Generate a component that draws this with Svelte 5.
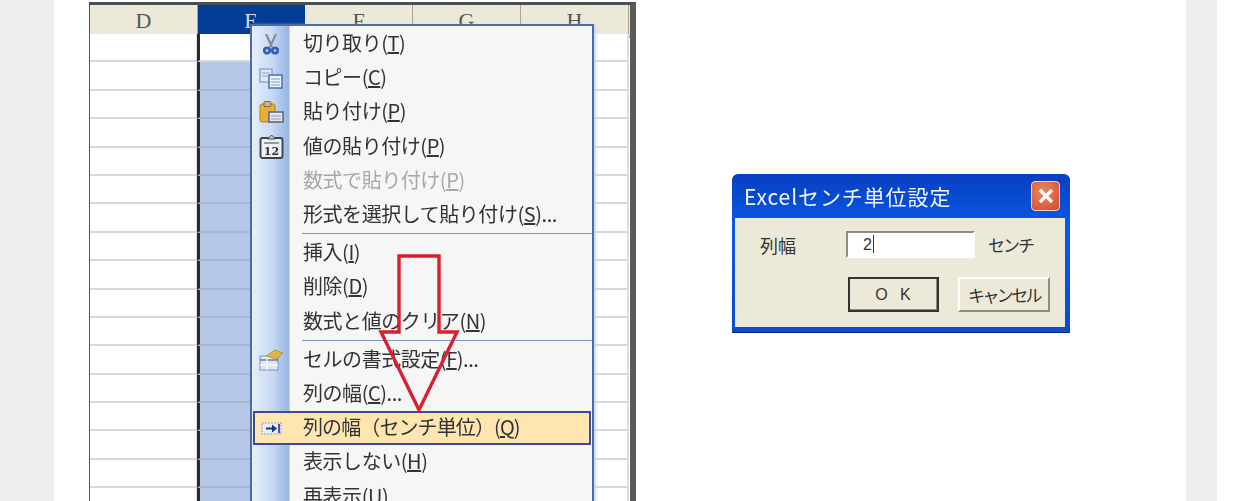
<script>
    const cols = ["D", "E", "F", "G", "H"];
    const rows = Array.from({ length: 17 }, (_, i) => i);

    const menu = [
        { label: "切り取り", key: "T", icon: "cut" },
        { label: "コピー", key: "C", icon: "copy" },
        { label: "貼り付け", key: "P", icon: "paste" },
        { label: "値の貼り付け", key: "P", icon: "values" },
        { label: "数式で貼り付け", key: "P", disabled: true },
        { label: "形式を選択して貼り付け", key: "S", tail: "...", sep: true },
        { label: "挿入", key: "I" },
        { label: "削除", key: "D" },
        { label: "数式と値のクリア", key: "N", sep: true },
        { label: "セルの書式設定", key: "F", tail: "...", icon: "format" },
        { label: "列の幅", key: "C", tail: "..." },
        { label: "列の幅（センチ単位）", key: "Q", icon: "width", active: true },
        { label: "表示しない", key: "H" },
        { label: "再表示", key: "U" }
    ];
</script>

<div class="page">
    <div class="gutter"></div>
    <main class="content">
        <section class="sheet">
            <div class="headers">
                {#each cols as c, i}
                    <div class="head" class:sel={i === 1}><span>{c}</span></div>
                {/each}
                <div class="head-end"></div>
            </div>
            <div class="grid">
                {#each rows as r}
                    {#each cols as c, i}
                        <div class="cell" class:blue={i === 1 && r > 0} class:current={i === 1}></div>
                    {/each}
                {/each}
            </div>

            <div class="menu">
                {#each menu as m}
                    <div class="item" class:disabled={m.disabled} class:active={m.active} class:sep={m.sep}>
                        <span class="ico">
                            {#if m.icon === "cut"}
                                <svg width="16" height="21" viewBox="0 0 16 21">
                                    <path d="M3 0l6 13M13 0L7 13" stroke="#858a96" stroke-width="2.2" fill="none" />
                                    <circle cx="4" cy="16.5" r="2.7" fill="none" stroke="#3560b8" stroke-width="2.8" />
                                    <circle cx="12" cy="16.5" r="2.7" fill="none" stroke="#3560b8" stroke-width="2.8" />
                                </svg>
                            {:else if m.icon === "copy"}
                                <svg width="24" height="21" viewBox="0 0 24 21">
                                    <rect x="1" y="1" width="12" height="13" fill="#e0e8f6" stroke="#88a6d8" stroke-width="1.5" />
                                    <path d="M3 5h8M3 8h8" stroke="#8aa4d0" />
                                    <rect x="10" y="7" width="13" height="13" fill="#eef3fb" stroke="#4d6fa8" stroke-width="1.5" />
                                    <path d="M12 11h9M12 14h9M12 17h9" stroke="#7f9ccb" />
                                </svg>
                            {:else if m.icon === "paste"}
                                <svg width="25" height="22" viewBox="0 0 25 22">
                                    <rect x="1" y="3" width="15" height="18" rx="2" fill="#e9ae35" stroke="#b08322" />
                                    <rect x="5" y="0.5" width="7" height="5" rx="1" fill="#c9b98a" stroke="#7d6b3c" />
                                    <rect x="10" y="11" width="14" height="10" fill="#e6e8ee" stroke="#5f6a80" stroke-width="1.6" />
                                    <path d="M12 15h10M12 18h10" stroke="#8d97ab" />
                                </svg>
                            {:else if m.icon === "values"}
                                <svg width="25" height="25" viewBox="0 0 25 25">
                                    <rect x="1.5" y="4" width="22" height="20" rx="2" fill="#eef1f6" stroke="#3d434e" stroke-width="1.9" />
                                    <path d="M8.5 5l4-4 4 4z" fill="#c8ccd4" stroke="#3d434e" />
                                    <path d="M5 9h15" stroke="#3d434e" />
                                    <text x="12.5" y="21" text-anchor="middle" class="twelve">12</text>
                                </svg>
                            {:else if m.icon === "format"}
                                <svg width="25" height="22" viewBox="0 0 25 22">
                                    <rect x="1" y="7" width="18" height="14" fill="#dfe6f1" stroke="#7f93b3" />
                                    <path d="M1 11h18" stroke="#5d7396" stroke-width="1.4" />
                                    <path d="M1 16h18M8 7v14" stroke="#f4f6fa" stroke-width="1.4" />
                                    <path d="M7 7l9-6 8 3-6 6z" fill="#e3b544" stroke="#a98a3a" stroke-width=".8" />
                                </svg>
                            {:else if m.icon === "width"}
                                <svg width="21" height="13" viewBox="0 0 21 13">
                                    <rect x="1" y="1" width="19" height="11" fill="#e8eefa" stroke="#9a9ab0" stroke-dasharray="2 1" />
                                    <path d="M5 6.5h9" stroke="#1e2f8c" stroke-width="2" />
                                    <path d="M11 2.5l5 4-5 4z" fill="#1e2f8c" />
                                    <path d="M18 2v9" stroke="#1e2f8c" stroke-width="1.6" />
                                </svg>
                            {/if}
                        </span>
                        <span class="label">{m.label}(<u>{m.key}</u>){m.tail ?? ""}</span>
                    </div>
                {/each}
            </div>

            <svg class="arrow" width="84" height="160" viewBox="0 0 84 160">
                <path d="M22 3H62V79H80L42 157L4 79H22Z" fill="none" stroke="#d8202f" stroke-width="3.4" />
            </svg>
        </section>

        <section class="dialog">
            <header class="titlebar">
                <span class="title">Excelセンチ単位設定</span>
                <span class="close">
                    <svg width="20" height="20" viewBox="0 0 20 20">
                        <path d="M4 4l12 12M16 4L4 16" stroke="#fff" stroke-width="3.2" />
                    </svg>
                </span>
            </header>
            <div class="dialog-body">
                <div class="line">
                    <span class="field-label">列幅</span>
                    <div class="input">2<i></i></div>
                    <span class="unit">センチ</span>
                </div>
                <div class="buttons">
                    <button class="btn ok">O K</button>
                    <button class="btn cancel">キャンセル</button>
                </div>
            </div>
        </section>
    </main>
    <div class="gutter right"></div>
</div>

<style>
    :global(body) {
        margin: 0;
        background: #fff;
    }

    .page {
        display: flex;
        height: 501px;
        width: 1251px;
        overflow: hidden;
        font-family: "Noto Sans CJK JP", "Liberation Sans", sans-serif;
    }

    .gutter {
        width: 54px;
        background: #eeeeee;
        flex: none;
    }

    .gutter.right {
        width: 31px;
    }

    .content {
        width: 1132px;
        flex: none;
        background: #fff;
        display: flex;
        align-items: flex-start;
        padding-left: 35px;
        box-sizing: border-box;
    }

    /* spreadsheet */
    .sheet {
        position: relative;
        width: 547px;
        height: 499px;
        margin-top: 2px;
        flex: none;
        box-sizing: border-box;
        border-top: 3px solid #4a4f50;
        border-left: 1px solid #555;
        border-right: 6px solid #5a5a5a;
        overflow: hidden;
        filter: blur(0.6px);
    }

    .headers {
        display: grid;
        grid-template-columns: 108px 107px 108px 108px 108px 1fr;
        height: 29px;
    }

    .head {
        background: #ece9d8;
        border-right: 1px solid #a9a590;
        border-bottom: 2px solid #aca899;
        box-sizing: border-box;
        font-family: "Liberation Serif", serif;
        font-size: 22px;
        color: #555;
        text-align: center;
        line-height: 31px;
    }

    .head.sel {
        background: #023c94;
        color: #d8dfe8;
        border-color: #023c94;
    }

    .head-end {
        background: #ece9d8;
        border-bottom: 2px solid #aca899;
    }

    .grid {
        display: grid;
        grid-template-columns: 108px 107px 108px 108px 108px;
        grid-auto-rows: 28.4px;
    }

    .cell {
        border-right: 2px solid #ddd;
        border-bottom: 2px solid #d8d8d8;
        box-sizing: border-box;
        background: #fff;
    }

    .cell.current {
        border-left: 3px solid #2a2a2a;
        margin-left: -1px;
    }

    .cell.blue {
        background: #b4c7e6;
        border-bottom-color: #a6b6d0;
        border-right-color: #b4c7e6;
    }

    /* context menu */
    .menu {
        position: absolute;
        left: 160px;
        top: 19px;
        width: 344px;
        box-sizing: border-box;
        border: 2px solid #4b6aa8;
        background: linear-gradient(to right, #e6eefb 0, #c8daf5 20px, #96b4e3 37px, #f6f6f6 38px);
        box-shadow: 3px 0 3px -1px #c8d4ee;
        padding-top: 1px;
    }

    .item {
        display: flex;
        align-items: center;
        height: 34.2px;
        box-sizing: border-box;
        font-size: 20px;
        color: #333;
        white-space: nowrap;
        position: relative;
    }

    .item.sep {
        margin-bottom: 4px;
    }

    .item.sep::after {
        content: "";
        position: absolute;
        left: 50px;
        right: 0;
        bottom: -2px;
        height: 1px;
        background: #7f98c8;
    }

    .item.disabled {
        color: #a8a8a8;
    }

    .item.active {
        background: #ffe6b0;
        outline: 2px solid #3d4a8c;
        outline-offset: -2px;
        margin: 0 1px 0 1px;
    }

    .ico {
        width: 38px;
        flex: none;
        display: flex;
        justify-content: center;
        margin-right: 13px;
    }

    .item.active .ico {
        width: 37px;
    }

    .ico svg {
        display: block;
    }

    .twelve {
        font-family: "DejaVu Serif", serif;
        font-size: 11px;
        font-weight: 700;
        fill: #333;
    }

    .label {
        letter-spacing: -0.45px;
        margin-top: -3px;
    }

    .item.active .label {
        letter-spacing: -0.9px;
    }

    .arrow {
        position: absolute;
        left: 287px;
        top: 248px;
    }

    /* dialog */
    .dialog {
        width: 338px;
        height: 158px;
        margin: 174px 0 0 96px;
        flex: none;
        box-sizing: border-box;
        background: linear-gradient(#083fc0, #0a5ae8 55px, #0a4ccc);
        border-radius: 6px 6px 0 0;
        padding: 0 5px 5px 3px;
        display: flex;
        flex-direction: column;
        filter: blur(0.5px);
        box-shadow: 0 1px 0 #06287a;
    }

    .titlebar {
        height: 44px;
        flex: none;
        display: flex;
        align-items: center;
        justify-content: space-between;
        padding: 0 5px 0 9px;
    }

    .title {
        color: #f2f6ff;
        font-size: 21px;
        letter-spacing: 0.9px;
    }

    .close {
        width: 29px;
        height: 30px;
        border: 1px solid #f0d8d0;
        border-radius: 4px;
        background: radial-gradient(circle at 40% 35%, #ea8a60, #d2492a);
        display: flex;
        align-items: center;
        justify-content: center;
        box-sizing: border-box;
    }

    .dialog-body {
        flex: 1;
        background: #ece9d8;
        padding: 13px 0 0 25px;
        color: #333;
    }

    .line {
        display: flex;
        align-items: center;
    }

    .field-label {
        width: 86px;
        font-size: 18px;
    }

    .input {
        width: 129px;
        height: 27px;
        box-sizing: border-box;
        background: #fff;
        border: 2px solid;
        border-color: #8f8c80 #fff #fff #8f8c80;
        padding-left: 15px;
        line-height: 23px;
        font-family: "Liberation Sans", sans-serif;
        font-size: 16px;
        margin-right: 13px;
    }

    .input i {
        display: inline-block;
        width: 1px;
        height: 18px;
        margin-left: 1px;
        background: #333;
        vertical-align: -3px;
    }

    .unit {
        font-size: 17px;
        letter-spacing: -2px;
    }

    .buttons {
        display: flex;
        gap: 19px;
        margin: 19px 0 0 88px;
    }

    .btn {
        width: 91px;
        height: 35px;
        padding: 0;
        background: #ece9d8;
        border: 2px solid;
        border-color: #fff #8f8c80 #8f8c80 #fff;
        font-family: inherit;
        font-size: 17px;
        color: #333;
        white-space: nowrap;
    }

    .btn.cancel {
        width: 92px;
        letter-spacing: -2.6px;
    }

    .btn.ok {
        border: 2px solid #333;
        box-shadow: inset -1px -1px 0 #8f8c80;
        font-family: "Liberation Sans", sans-serif;
        font-size: 16px;
        word-spacing: 6px;
        letter-spacing: 1px;
    }
</style>
